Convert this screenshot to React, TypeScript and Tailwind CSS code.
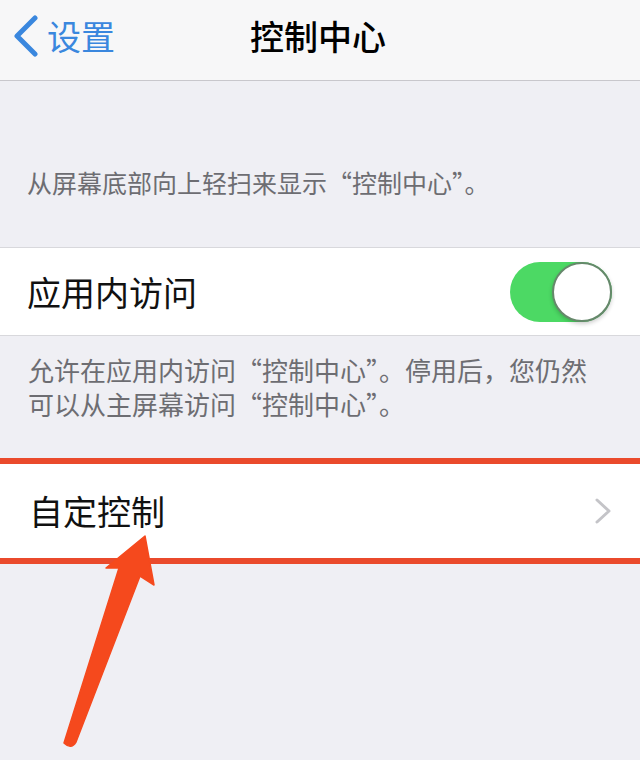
const font = "font-['Noto_Sans_CJK_SC','Noto_Sans',sans-serif]"

function Toggle() {
  return (
    <div className="relative w-[102px] h-[60px] rounded-full bg-[#4cd964]">
      <div className="absolute right-0 top-0 w-[60px] h-[60px] rounded-full bg-white border-2 border-[#66886b] shadow-[0_2px_4px_rgba(0,0,0,0.2)]" />
    </div>
  )
}

// annotation arrow drawn over the page
function Arrow() {
  return (
    <svg className="absolute left-0 top-0 pointer-events-none" width="640" height="760" viewBox="0 0 640 760">
      <path
        d="M145 536 L154 585 L140 576 L76 742 Q71 750 64 743 L119 568 L106 568 Z"
        fill="#f5491d"
        stroke="#f5491d"
        strokeWidth="1.5"
        strokeLinejoin="round"
      />
    </svg>
  )
}

export default function App() {
  return (
    <div className={`relative w-[640px] h-[760px] overflow-hidden bg-[#efeff4] ${font}`}>
      {/* Nav bar */}
      <div className="h-[81px] border-b border-[#c8c7cc] bg-[#f7f7f8] grid grid-cols-[1fr_auto_1fr] items-center pb-[8px]">
        <div className="flex items-center pl-[13px]">
          <svg width="25" height="42" viewBox="0 0 25 42" fill="none">
            <path d="M22 3 L4 21 L22 39" stroke="#3a87de" strokeWidth="5" strokeLinecap="round" strokeLinejoin="round" />
          </svg>
          <span className="ml-[9px] text-[34px] leading-[40px] text-[#3a87de]">设置</span>
        </div>
        <h1 className="text-[34px] leading-[40px] font-medium text-black -ml-[4px]">控制中心</h1>
        <div />
      </div>

      {/* Section header */}
      <p className="pt-[83px] pl-[27px] text-[25px] leading-[36px] text-[#6d6d72]">
        从屏幕底部向上轻扫来显示“控制中心”。
      </p>

      {/* In-app access row */}
      <div className="mt-[47px] h-[89px] bg-white border-y border-[#d8d8dc] flex items-center justify-between pl-[27px] pr-[28px]">
        <span className="text-[34px] leading-[40px] text-[#111]">应用内访问</span>
        <Toggle />
      </div>

      <p className="pt-[17px] pl-[28px] text-[26px] leading-[34px] text-[#6d6d72]">
        允许在应用内访问“控制中心”。停用后，您仍然
        <br />
        可以从主屏幕访问“控制中心”。
      </p>

      {/* Customize row (highlighted) */}
      <div className="mt-[37px] h-[106px] bg-white border-y-[6px] border-[#ea4a2c] flex items-center justify-between pl-[29px] pr-[28px]">
        <span className="text-[34px] leading-[40px] text-[#111]">自定控制</span>
        <svg width="18" height="26" viewBox="0 0 18 26" fill="none">
          <path d="M3 2 L15 13 L3 24" stroke="#c4c4c8" strokeWidth="3" strokeLinecap="round" strokeLinejoin="round" />
        </svg>
      </div>

      <Arrow />
    </div>
  )
}
